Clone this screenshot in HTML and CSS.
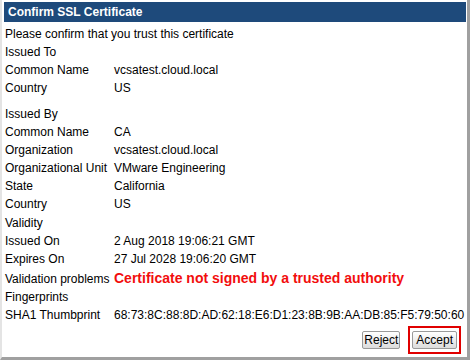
FILE: index.html
```html
<!DOCTYPE html>
<html>
<head>
<meta charset="utf-8">
<link rel="stylesheet" href="styles.css">
</head>
<body>
<div class="dialog">
  <div class="title">Confirm SSL Certificate</div>
  <div class="content">
    <div class="intro">Please confirm that you trust this certificate</div>
    <div class="row"><span class="label">Issued To</span></div>
    <div class="row"><span class="label">Common Name</span><span class="value">vcsatest.cloud.local</span></div>
    <div class="row"><span class="label">Country</span><span class="value">US</span></div>

    <div class="row section-gap"><span class="label">Issued By</span></div>
    <div class="row"><span class="label">Common Name</span><span class="value">CA</span></div>
    <div class="row"><span class="label">Organization</span><span class="value">vcsatest.cloud.local</span></div>
    <div class="row"><span class="label">Organizational Unit</span><span class="value">VMware Engineering</span></div>
    <div class="row"><span class="label">State</span><span class="value">California</span></div>
    <div class="row"><span class="label">Country</span><span class="value">US</span></div>

    <div class="row small-gap"><span class="label">Validity</span></div>
    <div class="row"><span class="label">Issued On</span><span class="value">2 Aug 2018 19:06:21 GMT</span></div>
    <div class="row"><span class="label">Expires On</span><span class="value">27 Jul 2028 19:06:20 GMT</span></div>
    <div class="row"><span class="label">Validation problems</span><span class="value error">Certificate not signed by a trusted authority</span></div>
    <div class="row"><span class="label">Fingerprints</span></div>
    <div class="row"><span class="label">SHA1 Thumbprint</span><span class="value">68:73:8C:88:8D:AD:62:18:E6:D1:23:8B:9B:AA:DB:85:F5:79:50:60</span></div>
  </div>
  <div class="actions">
    <button class="btn btn-reject">Reject</button>
    <span class="focus-ring"><button class="btn btn-accept">Accept</button></span>
  </div>
</div>
</body>
</html>
```

FILE: styles.css
```css
html, body {
  margin: 0;
  padding: 0;
  background: #ffffff;
}

body {
  font-family: "Liberation Sans", Arial, sans-serif;
  font-size: 12px;
  color: #000000;
}

.dialog {
  box-sizing: border-box;
  width: 470px;
  height: 360px;
  border-left: 2px solid #e4e4e4;
  border-right: 3px solid #a0a0a0;
  border-bottom: 3px solid #a0a0a0;
  padding: 2px 1px 0 2px;
  display: flex;
  flex-direction: column;
}

.title {
  height: 20px;
  line-height: 20px;
  background: #1e4a7b;
  color: #ffffff;
  font-weight: bold;
  font-size: 12px;
  padding-left: 4px;
}

.content {
  padding-left: 1px;
  margin-top: 3px;
}

.intro {
  line-height: 18px;
}

.row {
  display: flex;
  align-items: baseline;
  line-height: 18px;
  min-height: 18px;
}

.section-gap {
  margin-top: 8px;
}

.small-gap {
  margin-top: 1px;
}

.label {
  width: 109px;
  flex: none;
  white-space: nowrap;
}

.value {
  white-space: nowrap;
}

.error {
  color: #f20d0d;
  font-weight: bold;
  font-size: 14px;
  line-height: 20px;
}

.actions {
  display: flex;
  justify-content: flex-end;
  align-items: center;
  gap: 8px;
  margin-top: 2px;
  padding-right: 5px;
}

.focus-ring {
  display: flex;
  border: 2px solid #e00000;
  padding: 3px 2px;
}

.btn {
  font-family: "Liberation Sans", Arial, sans-serif;
  font-size: 12px;
  color: #000000;
  height: 18px;
  padding: 0 3px;
  border: 1px solid #9a9a9a;
  border-radius: 2px;
  background: linear-gradient(#ffffff, #dcdcdc);
  line-height: 16px;
}

.btn-reject {
  padding: 0 1px;
}

.btn-accept {
  padding: 0 3px;
}
```
